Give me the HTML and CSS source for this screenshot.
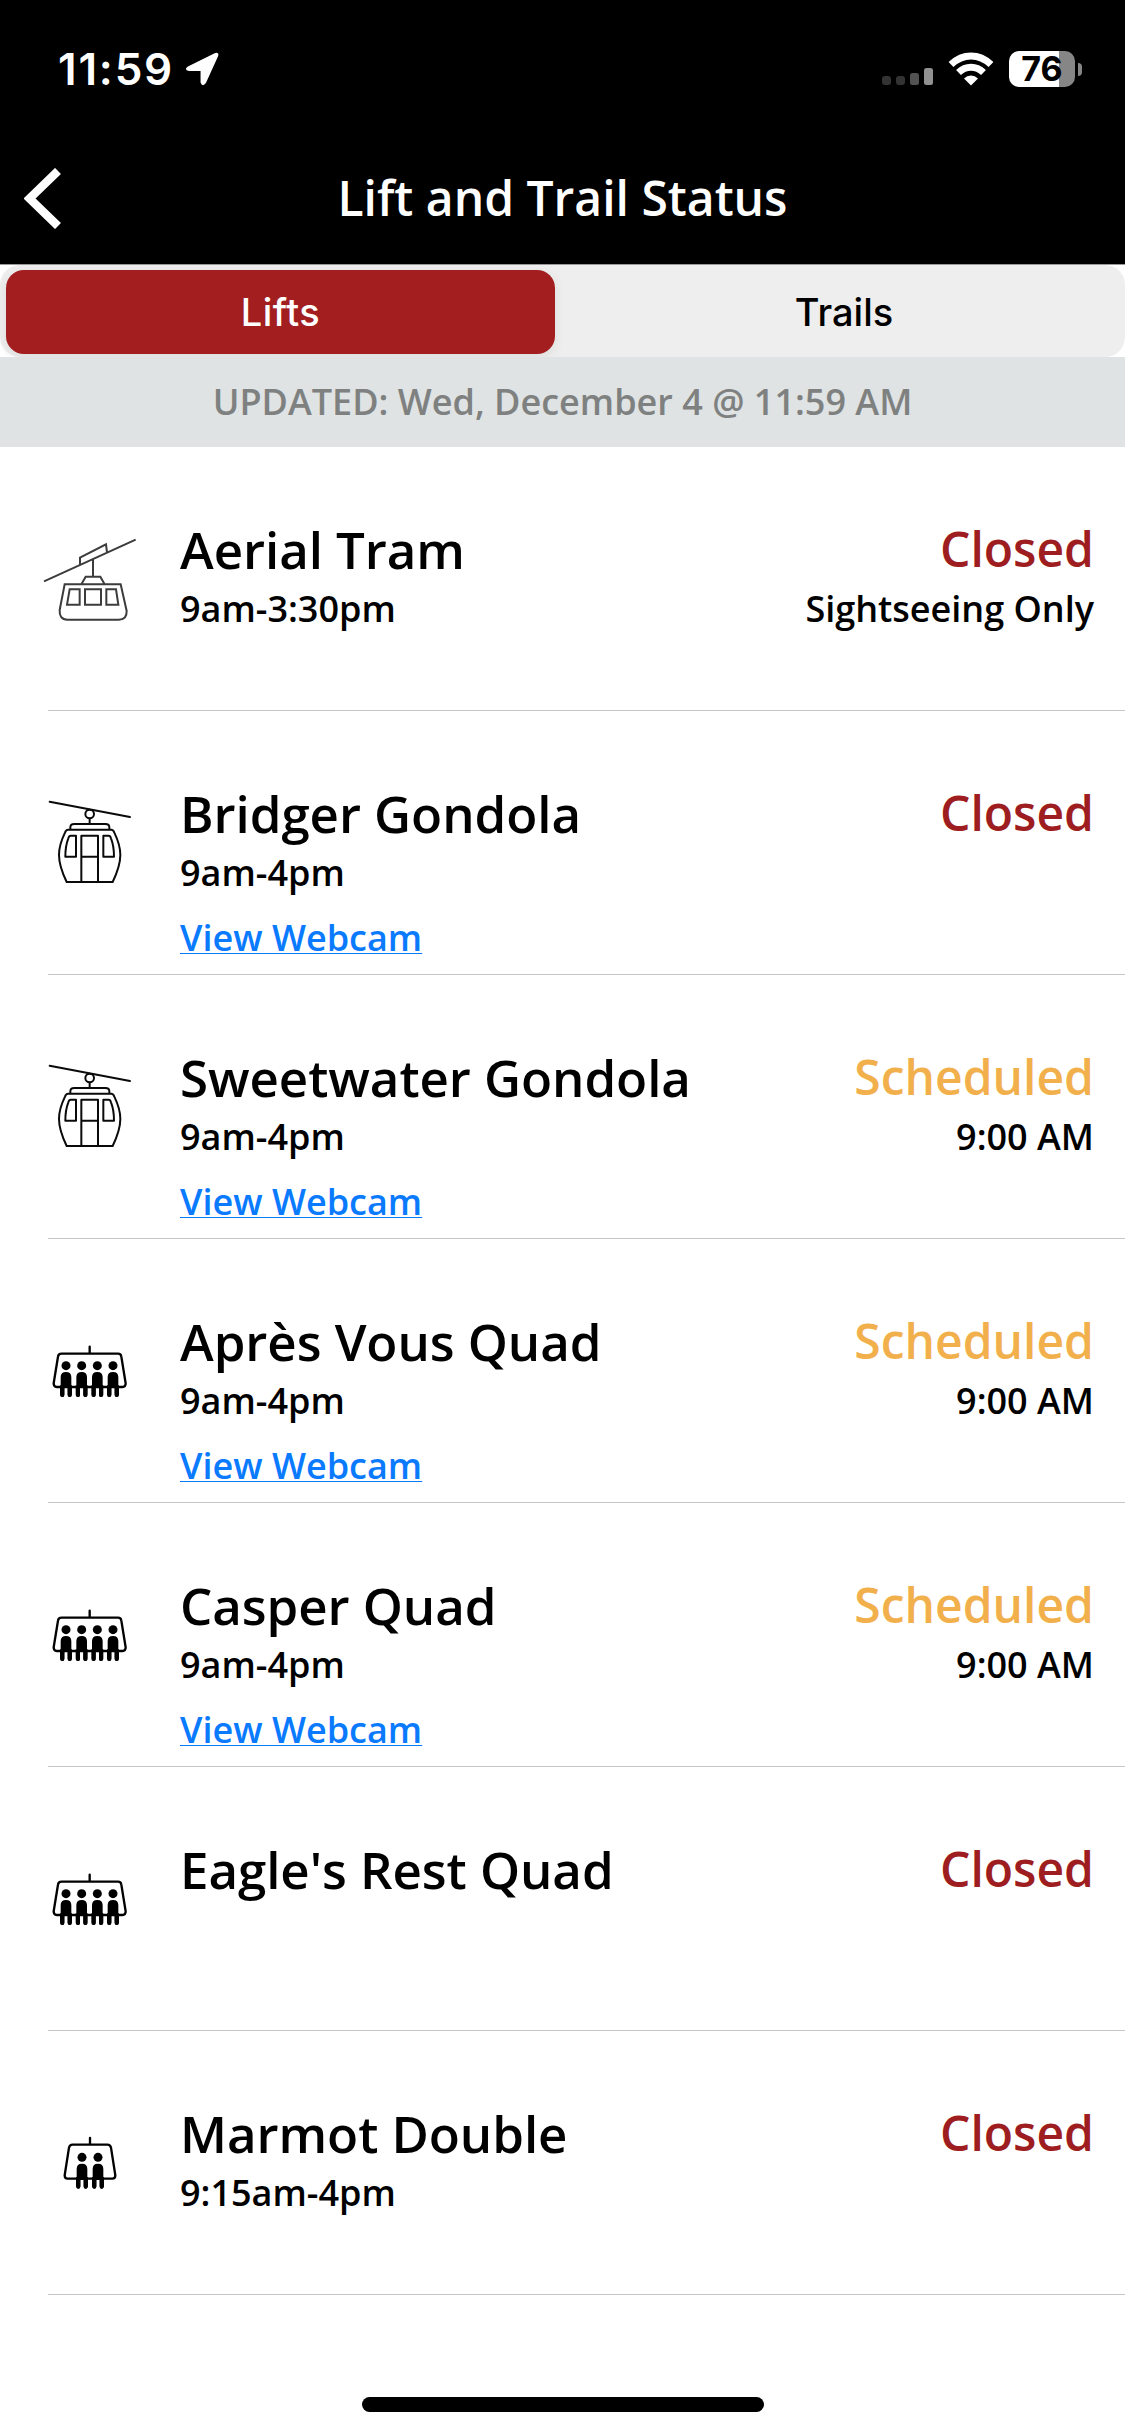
FILE: index.html
```html
<!DOCTYPE html>
<html lang="en">
<head>
<meta charset="utf-8">
<title>Lift and Trail Status</title>
<link rel="stylesheet" href="styles.css">
</head>
<body>
<svg class="symbols" aria-hidden="true">
  <symbol id="tram" viewBox="0 0 360 360">
    <g fill="none" stroke="#3c3c3c" stroke-width="6">
      <path d="M42 184L317 59M150 133V113L228 73L231 97M189 119V169M155 191L167 170H211L223 191M104 193H272L290 273Q291 299 266 299H112Q87 298 89 270Z"/>
      <path d="M119 208H149V254H111ZM165 208H213V254H165ZM229 208H258L265 254H229Z"/>
    </g>
  </symbol>
  <symbol id="gondola" viewBox="0 0 360 360">
    <g fill="none" stroke="#0a0a0a" stroke-width="6" stroke-linejoin="round" stroke-linecap="round">
      <path d="M59 65L300 111"/>
      <circle cx="179" cy="102" r="13"/>
      <path d="M179 116V132M121 147V142Q121 132 133 132H226Q238 132 238 142V147M114 149H244Q250 149 253 158Q271 195 271 225Q271 258 248 306H110Q87 258 87 225Q87 195 105 158Q108 149 114 149Z"/>
      <path d="M154 306V167H204V306M154 230H204M122 167H138V230H106Q106 198 115 175Q117 167 122 167ZM220 167H236Q241 167 243 175Q252 198 252 230H220Z"/>
    </g>
  </symbol>
  <symbol id="rider" viewBox="0 0 48 120" overflow="visible">
    <circle cx="24" cy="17" r="13.500"/>
    <path d="M8 52Q8 36 24 36Q40 36 40 52V105Q40 111 35 111Q29 111 29 105V84H19V105Q19 111 13 111Q8 111 8 105Z"/>
    <path d="M6 76H42V104Q42 111 35.500 111Q29 111 29 104V84H19V104Q19 111 12.500 111Q6 111 6 104Z"/>
  </symbol>
  <symbol id="quad" viewBox="0 0 360 360">
    <path d="M179 80V101M95 101H264Q273 101 274 110L287 190Q287 201 278 201H80Q71 201 71 190L84 110Q85 101 95 101Z" fill="none" stroke="#000" stroke-width="7" stroke-linecap="round"/>
    <use href="#rider" x="84" y="120" width="48" height="120"/>
    <use href="#rider" x="131" y="120" width="48" height="120"/>
    <use href="#rider" x="178" y="120" width="48" height="120"/>
    <use href="#rider" x="225" y="120" width="48" height="120"/>
  </symbol>
  <symbol id="double" viewBox="0 0 360 360">
    <path d="M180 84V104M128 104H232Q241 104 243 113L256 196Q256 206 247 206H113Q104 206 104 196L117 113Q119 104 128 104Z" fill="none" stroke="#000" stroke-width="7" stroke-linecap="round"/>
    <use href="#rider" x="132" y="125" width="48" height="120"/>
    <use href="#rider" x="180" y="125" width="48" height="120"/>
  </symbol>
</svg>

<header class="header">
  <div class="status-bar">
    <div class="clock">
      <span class="time">11:59</span>
      <svg class="location" viewBox="0 0 36 36"><path d="M3 15.500L30.500 1.700Q35.500 0 34 5L21.500 32.500Q18 37 16 32V20H4Q-1.500 18.500 3 15.500Z" fill="#fff"/></svg>
    </div>
    <div class="indicators">
      <svg class="signal" viewBox="0 0 51 17"><rect y="8" width="9" height="9" rx="3" fill="#333"/><rect x="14" y="8" width="9" height="9" rx="3" fill="#333"/><rect x="28" y="5" width="9" height="12" rx="2.500" fill="#525252"/><rect x="42" width="9" height="17" rx="2.500" fill="#919191"/></svg>
      <svg class="wifi" viewBox="0 0 46 34"><g fill="none" stroke="#fff" stroke-width="7"><path d="M3 12.500Q12 4 23 4Q34 4 43 12.500"/><path d="M10.500 20.500Q16 15.300 23 15.300Q30 15.300 35.500 20.500"/></g><path d="M23 33.500L16 26.500Q19 23.500 23 23.500Q27 23.500 30 26.500Z" fill="#fff"/></svg>
      <div class="battery"><div class="battery-body">76</div><div class="battery-cap"></div></div>
    </div>
  </div>
  <div class="nav-bar">
    <svg class="back" viewBox="0 0 37 61"><path d="M34 3L5.500 30.500L34 58" fill="none" stroke="#fff" stroke-width="8.500"/></svg>
    <h1 class="title">Lift and Trail Status</h1>
  </div>
</header>

<div class="tabs-wrap">
  <nav class="tabs">
    <div class="tab tab-active">Lifts</div>
    <div class="tab">Trails</div>
  </nav>
</div>
<div class="updated">UPDATED: Wed, December 4 @ 11:59 AM</div>

<main class="list">
  <section class="lift">
    <svg class="icon icon-tram"><use href="#tram"/></svg>
    <div class="info"><h2 class="name">Aerial Tram</h2><p class="detail">9am-3:30pm</p></div>
    <div class="state"><span class="status closed">Closed</span><span class="detail">Sightseeing Only</span></div>
  </section>
  <section class="lift">
    <svg class="icon icon-gondola"><use href="#gondola"/></svg>
    <div class="info"><h2 class="name">Bridger Gondola</h2><p class="detail">9am-4pm</p><a class="webcam">View Webcam</a></div>
    <div class="state"><span class="status closed">Closed</span></div>
  </section>
  <section class="lift">
    <svg class="icon icon-gondola"><use href="#gondola"/></svg>
    <div class="info"><h2 class="name">Sweetwater Gondola</h2><p class="detail">9am-4pm</p><a class="webcam">View Webcam</a></div>
    <div class="state"><span class="status scheduled">Scheduled</span><span class="detail">9:00 AM</span></div>
  </section>
  <section class="lift">
    <svg class="icon icon-quad"><use href="#quad"/></svg>
    <div class="info"><h2 class="name">Après Vous Quad</h2><p class="detail">9am-4pm</p><a class="webcam">View Webcam</a></div>
    <div class="state"><span class="status scheduled">Scheduled</span><span class="detail">9:00 AM</span></div>
  </section>
  <section class="lift">
    <svg class="icon icon-quad"><use href="#quad"/></svg>
    <div class="info"><h2 class="name">Casper Quad</h2><p class="detail">9am-4pm</p><a class="webcam">View Webcam</a></div>
    <div class="state"><span class="status scheduled">Scheduled</span><span class="detail">9:00 AM</span></div>
  </section>
  <section class="lift">
    <svg class="icon icon-quad"><use href="#quad"/></svg>
    <div class="info"><h2 class="name">Eagle's Rest Quad</h2></div>
    <div class="state"><span class="status closed">Closed</span></div>
  </section>
  <section class="lift">
    <svg class="icon icon-double"><use href="#double"/></svg>
    <div class="info"><h2 class="name">Marmot Double</h2><p class="detail">9:15am-4pm</p></div>
    <div class="state"><span class="status closed">Closed</span></div>
  </section>
</main>
<footer class="home"><div class="home-indicator"></div></footer>
</body>
</html>
```
FILE: styles.css
```css
* { box-sizing: border-box; margin: 0; padding: 0; }

body {
  width: 1125px;
  height: 2436px;
  display: flex;
  flex-direction: column;
  background: #fff;
  color: #000;
  font-family: "Open Sans", "Noto Sans", sans-serif;
  font-weight: 600;
  overflow: hidden;
}

.symbols { display: none; }

.header { height: 265px; background: #000; color: #fff; border-bottom: 1px solid #999; }

.status-bar {
  height: 138px;
  padding: 0 43px 0 58px;
  display: flex;
  justify-content: space-between;
  align-items: center;
  font-family: Inter, "Liberation Sans", sans-serif;
}
.clock { display: flex; align-items: center; gap: 11px; }
.time { font-size: 44px; line-height: 60px; font-weight: 600; letter-spacing: 1.8px; }
.location { width: 35px; height: 36px; }
.indicators { display: flex; align-items: center; }
.signal { width: 51px; height: 17px; margin-top: 15px; }
.wifi { width: 46px; height: 34px; margin-left: 15px; }
.battery { display: flex; align-items: center; margin-left: 15px; gap: 3px; }
.battery-body {
  width: 66px;
  height: 36px;
  border-radius: 10px;
  background: linear-gradient(to right, #fff 50px, #868686 50px);
  color: #000;
  font-size: 34px;
  line-height: 36px;
  font-weight: 700;
  text-align: center;
}
.battery-cap { width: 4px; height: 13px; border-radius: 0 4px 4px 0; background: #868686; }

.nav-bar {
  height: 126px;
  padding: 0 24px;
  display: grid;
  grid-template-columns: 37px 1fr 37px;
}
.back { width: 37px; height: 61px; margin-top: 30px; }
.title {
  margin-top: 30px;
  font-size: 48px;
  line-height: 60px;
  font-weight: 600;
  text-align: center;
}

.tabs-wrap { height: 92px; background: #fff; }
.tabs {
  height: 92px;
  padding: 5px 0 3px 6px;
  display: flex;
  border-radius: 20px;
  background: #eee;
  font-family: Inter, "Liberation Sans", sans-serif;
  font-size: 38px;
  font-weight: 500;
  line-height: 84px;
  text-align: center;
}
.tab { flex: 1; padding-left: 8px; }
.tab-active {
  flex: 0 0 549px;
  padding-left: 0;
  letter-spacing: .5px;
  border-radius: 18px;
  background: #a21e1f;
  color: #fff;
  box-shadow: 0 3px 12px rgba(0, 0, 0, .08);
}

.updated {
  height: 90px;
  background: #dfe3e4;
  color: #7e8180;
  font-size: 36px;
  line-height: 90px;
  text-align: center;
}

.lift {
  height: 264px;
  margin-left: 48px;
  padding-right: 31px;
  display: flex;
  align-items: flex-start;
  border-bottom: 1px solid #c6c6c8;
}
.icon { width: 120px; height: 120px; margin-left: -18px; margin-right: 30px; flex: none; }
.icon-tram { margin-top: 73px; }
.icon-gondola { margin-top: 69px; }
.icon-quad { margin-top: 81px; }
.icon-double { margin-top: 79px; }

.info { flex: 1; padding-top: 72px; display: flex; flex-direction: column; align-items: flex-start; }
.name { font-size: 51px; line-height: 60px; font-weight: 600; letter-spacing: -.05px; }
.detail { margin-top: 6px; font-size: 36px; line-height: 48px; }
.webcam {
  margin-top: 17px;
  font-size: 36px;
  line-height: 48px;
  color: #0a7aff;
  text-decoration: underline;
  text-decoration-thickness: 1px;
  text-decoration-skip-ink: none;
  text-underline-offset: 2px;
}

.state { padding-top: 72px; display: flex; flex-direction: column; align-items: flex-end; }
.status { font-size: 48px; line-height: 60px; }
.closed { color: #9d1d20; }
.scheduled { color: #f2b04d; }

.home { flex: 1; display: flex; justify-content: center; align-items: flex-end; padding-bottom: 24px; }
.home-indicator { width: 402px; height: 15px; border-radius: 8px; background: #000; }
```
